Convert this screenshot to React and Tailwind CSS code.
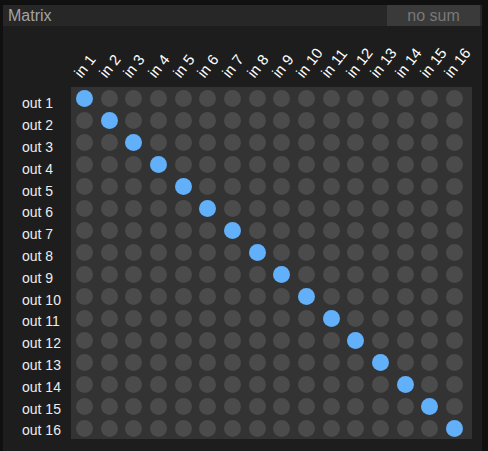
const N = 16;
const idx = Array.from({ length: N }, (_, i) => i);

export default function App() {
  return (
    <div className="w-[488px] h-[451px] bg-[#101010] pt-[5px] pl-[3px] overflow-hidden font-['Liberation_Sans',Arial,sans-serif]">
      <div className="w-[479px] h-[446px] bg-[#1d1d1d] flex flex-col">
        <div className="h-[21px] bg-[#272727] flex items-center justify-between">
          <span className="pl-[5px] text-[16px] leading-none text-[#a3a3a3]">Matrix</span>
          <div className="w-[93px] h-full mr-[2px] bg-[#3a3a3a] flex items-center justify-center text-[16px] leading-none text-[#787878]">
            no sum
          </div>
        </div>
        <div className="flex">
          <div className="w-[68px] pt-[67px] pl-[19px] flex flex-col">
            {idx.map((i) => (
              <div key={i} className="h-[21.8px] flex items-center text-[14px] text-[#ececec] whitespace-nowrap">
                out {i + 1}
              </div>
            ))}
          </div>
          <div className="flex flex-col">
            <div className="h-[61px] pl-[1px] grid grid-cols-[repeat(16,24.7px)]">
              {idx.map((i) => (
                <div key={i} className="relative h-[61px]">
                  <span className="absolute left-[11px] bottom-[7px] origin-bottom-left -rotate-[52deg] whitespace-nowrap text-[15px] leading-none text-white">
                    in {i + 1}
                  </span>
                </div>
              ))}
            </div>
            <div className="w-[401px] h-[352px] bg-[#333333] pl-[1px] grid grid-cols-[repeat(16,24.7px)] grid-rows-[repeat(16,22px)]">
              {idx.map((r) =>
                idx.map((c) => (
                  <div key={r + "-" + c} className="flex items-center justify-center">
                    <div className={r === c ? "w-[17px] h-[17px] rounded-full bg-[#62b0fa]" : "w-[17px] h-[17px] rounded-full bg-[#4b4b4b]"} />
                  </div>
                ))
              )}
            </div>
          </div>
        </div>
      </div>
    </div>
  );
}
